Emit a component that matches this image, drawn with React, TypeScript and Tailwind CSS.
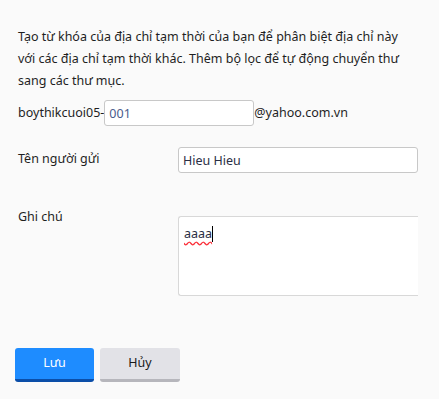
import React from "react";

export default function App() {
  return (
    <div className="w-[439px] h-[399px] bg-[#fafafa] text-[#1f1f1f] overflow-hidden" style={{ fontFamily: '"Noto Sans", "Open Sans", sans-serif' }}>
      <div className="pl-[18px] pt-[26px] text-[12.5px] leading-[22px]">
        <p className="whitespace-nowrap">
          Tạo từ khóa của địa chỉ tạm thời của bạn để phân biệt địa chỉ này
          <br />
          với các địa chỉ tạm thời khác. Thêm bộ lọc để tự động chuyển thư
          <br />
          sang các thư mục.
        </p>
        <div className="flex items-center mt-[8px] h-[26px]">
          <span>boythikcuoi05-</span>
          <input
            defaultValue="001"
            className="w-[150px] h-[26px] border border-[#c8c8c8] rounded-[3px] bg-white px-[4px] text-[12.5px] text-[#4a5c8c] outline-none"
            style={{ fontFamily: '"Noto Sans", sans-serif' }}
          />
          <span>@yahoo.com.vn</span>
        </div>
        <div className="flex mt-[21px]">
          <div className="w-[160px] pt-[1px]">Tên người gửi</div>
          <input
            defaultValue="Hieu Hieu"
            className="w-[240px] h-[26px] border border-[#c8c8c8] rounded-[3px] bg-white px-[4px] text-[12.5px] text-[#2a2f45] outline-none"
            style={{ fontFamily: '"Noto Sans", sans-serif' }}
          />
        </div>
        <div className="flex mt-[43px]">
          <div className="w-[160px] -mt-[10px]">Ghi chú</div>
          <div className="w-[240px] h-[80px] border-t border-b border-l border-[#d8d8d8] rounded-l-[3px] bg-white px-[5px] pt-[6px] text-[12.5px] text-[#2a2f45]">
            <span className="underline decoration-wavy decoration-red-500 underline-offset-[3px]">aaaa</span>
            <span className="inline-block w-[1px] h-[16px] bg-black align-middle -mt-[2px]"></span>
          </div>
        </div>
      </div>
      <div className="flex gap-[6px] pl-[15px] mt-[52px]">
        <button className="w-[79px] h-[34px] bg-[#1e8cff] border-b-[3px] border-[#0b4ea8] rounded-[3px] text-white text-[12.5px]" style={{ fontFamily: '"Noto Sans", sans-serif' }}>
          Lưu
        </button>
        <button className="w-[80px] h-[34px] bg-[#e2e2e7] border-b-[3px] border-[#b6b6bc] rounded-[3px] text-[#1a1a1a] text-[12.5px]" style={{ fontFamily: '"Noto Sans", sans-serif' }}>
          Hủy
        </button>
      </div>
    </div>
  );
}
